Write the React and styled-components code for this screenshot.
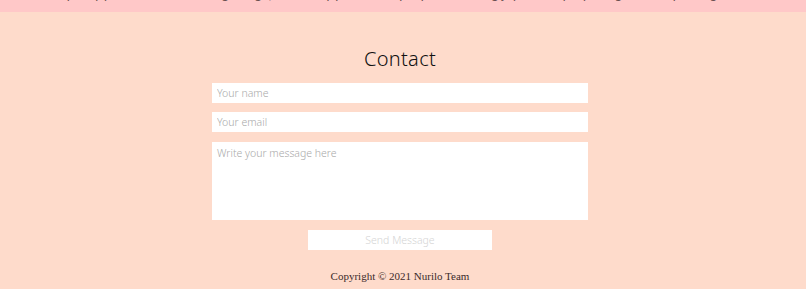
import React from "react";
import styled, { createGlobalStyle } from "styled-components";

const Global = createGlobalStyle`
  html, body { margin: 0; padding: 0; background: #fedbcb; }
  body { font-family: "Lato", "Noto Sans", sans-serif; overflow: hidden; }
  * { box-sizing: border-box; }
`;

const Page = styled.div`
  width: 806px;
  height: 289px;
  display: flex;
  flex-direction: column;
  align-items: center;
  padding-right: 6px;
  background: #fedbcb;
`;

const TopBand = styled.div`
  align-self: stretch;
  margin-right: -6px;
  height: 12px;
  background: #ffc8c8;
  overflow: hidden;
  display: flex;
  justify-content: center;
`;

const TopText = styled.p`
  margin: -13px 0 0;
  font-family: "Lato", sans-serif;
  font-size: 13px;
  line-height: 14px;
  color: #6a5050;
  white-space: nowrap;
`;

const Title = styled.h2`
  margin: 34px 0 0;
  font-family: "Noto Sans", sans-serif;
  font-weight: 300;
  font-size: 20px;
  line-height: 26px;
  color: #111;
  letter-spacing: 0.3px;
`;

const Form = styled.form`
  width: 376px;
  margin-top: 11px;
  display: flex;
  flex-direction: column;
  align-items: center;
  gap: 9px;
`;

const Field = styled.input`
  width: 100%;
  height: 20px;
  border: none;
  outline: none;
  background: #fff;
  padding: 0 5px;
  font-family: "Noto Sans", sans-serif;
  font-weight: 300;
  font-size: 10.5px;
  color: #333;
  &::placeholder { color: #a9a9a9; }
`;

const Message = styled.textarea`
  width: 100%;
  height: 78px;
  margin-top: 1px;
  border: none;
  outline: none;
  resize: none;
  background: #fff;
  padding: 4px 5px;
  font-family: "Noto Sans", sans-serif;
  font-weight: 300;
  font-size: 10.5px;
  color: #333;
  &::placeholder { color: #a9a9a9; }
`;

const Send = styled.button`
  width: 184px;
  height: 20px;
  margin-top: 1px;
  border: none;
  background: #fff;
  font-family: "Noto Sans", sans-serif;
  font-weight: 300;
  font-size: 10.5px;
  color: #d4d4d4;
  cursor: pointer;
`;

const Footer = styled.p`
  margin: 20px 0 0;
  font-family: "Liberation Serif", serif;
  font-size: 11px;
  color: #3c2a2a;
`;

export default function App() {
  return (
    <Page>
      <Global />
      <TopBand>
        <TopText>
          quality products and amazing design, crafted by passionate people who bring joy to everyday living with simple elegance
        </TopText>
      </TopBand>
      <Title>Contact</Title>
      <Form onSubmit={(e) => e.preventDefault()}>
        <Field placeholder="Your name" spellCheck={false} />
        <Field placeholder="Your email" spellCheck={false} />
        <Message placeholder="Write your message here" spellCheck={false} />
        <Send type="submit">Send Message</Send>
      </Form>
      <Footer>Copyright © 2021 Nurilo Team</Footer>
    </Page>
  );
}
